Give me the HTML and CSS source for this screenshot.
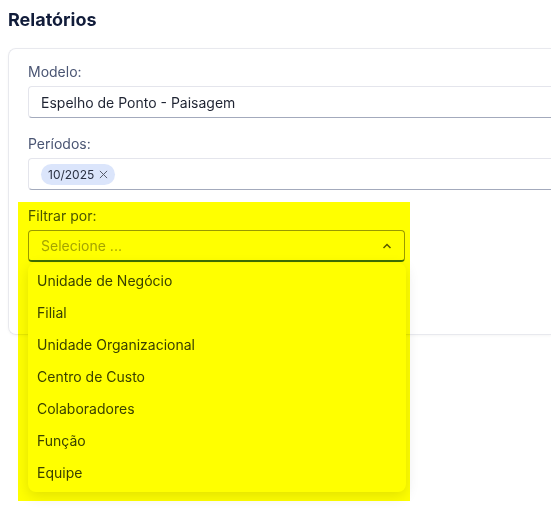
FILE: index.html
```html
<!DOCTYPE html>
<html lang="pt-BR">
<head>
	<meta charset="utf-8">
	<title>Relatórios</title>
	<link rel="stylesheet" href="styles.css">
</head>
<body>
	<div id="page">
		<h1 class="PageTitle">Relatórios</h1>

		<div class="Card">
			<div class="Field">
				<label class="FieldLabel">Modelo:</label>
				<div class="Input">Espelho de Ponto - Paisagem</div>
			</div>

			<div class="Field">
				<label class="FieldLabel">Períodos:</label>
				<div class="Input">
					<span class="Chip">10/2025
						<svg class="ChipClose" width="9" height="9" viewBox="0 0 10 10"><path d="M1 1L9 9M9 1L1 9" stroke="currentColor" stroke-width="1.1" fill="none"/></svg>
					</span>
				</div>
			</div>

			<div class="Field FieldNarrow">
				<label class="FieldLabel">Filtrar por:</label>
				<div class="Select Open">
					<span class="Placeholder">Selecione ...</span>
					<svg class="Chevron" width="10" height="6" viewBox="0 0 10 6"><path d="M1.5 5L5 1.5L8.5 5" stroke="currentColor" stroke-width="1.5" fill="none"/></svg>
					<ul class="Menu">
						<li>Unidade de Negócio</li>
						<li>Filial</li>
						<li>Unidade Organizacional</li>
						<li>Centro de Custo</li>
						<li>Colaboradores</li>
						<li>Função</li>
						<li>Equipe</li>
					</ul>
				</div>
			</div>
		</div>

		<div class="Highlight"></div>
	</div>
</body>
</html>
```

FILE: styles.css
```css
*
{
	padding: 0px;
	margin: 0px;
	box-sizing: border-box;
}
html
{
	overflow: hidden;
}
body
{
	background-color: white;
	font-family: Inter, "Noto Sans", sans-serif;
	color: #1f2937;
}
#page
{
	position: relative;
	padding: 8px 0 8px 8px;
	min-height: 515px;
}
.PageTitle
{
	font-size: 18px;
	line-height: 24px;
	font-weight: 700;
	color: #111c3a;
	margin-bottom: 16px;
}
/* card runs on past the right edge, so no right border */
.Card
{
	border: 1px solid #e8e9ee;
	border-right: none;
	border-radius: 8px 0 0 8px;
	box-shadow: 0 1px 3px rgba(0, 0, 0, 0.04);
	padding: 13px 0 72px 19px;
	display: flex;
	flex-direction: column;
	gap: 16px;
}
.Field
{
	display: flex;
	flex-direction: column;
	gap: 4px;
}
.FieldNarrow
{
	width: 377px;
}
.FieldLabel
{
	font-size: 14px;
	line-height: 20px;
	color: #4a5573;
}
.Input
{
	height: 32px;
	border: 1px solid #e4e5ec;
	border-bottom-color: #a3aabc;
	border-right: none;
	border-radius: 4px 0 0 4px;
	padding: 0 12px;
	display: flex;
	align-items: center;
	font-size: 14px;
	color: #1f2433;
}
.Chip
{
	display: inline-flex;
	align-items: center;
	gap: 5px;
	height: 21px;
	padding: 0 7px 0 7px;
	border-radius: 11px;
	background-color: #dbe5fb;
	font-size: 12px;
	color: #2b3142;
}
.ChipClose
{
	color: #565c6c;
}
.Select
{
	position: relative;
	height: 32px;
	border: 1px solid #9a9aa0;
	border-bottom: 2px solid #3f6f3a;
	border-radius: 4px;
	padding: 0 12px;
	display: flex;
	align-items: center;
	justify-content: space-between;
	font-size: 14px;
}
.Placeholder
{
	color: #a4a4b0;
}
.Chevron
{
	color: #5a5a60;
	margin-right: 0px;
}
.Menu
{
	position: absolute;
	left: -1px;
	right: -2px;
	top: 32px;
	list-style: none;
	background-color: white;
	border-radius: 8px;
	box-shadow: 0 4px 14px rgba(0, 0, 0, 0.12);
	padding: 2px 0 3px 0;
}
.Menu li
{
	height: 32px;
	line-height: 32px;
	padding-left: 9px;
	font-size: 14px;
	color: #3a4150;
}
/* marker laid over the filter block */
.Highlight
{
	position: absolute;
	left: 18px;
	top: 202px;
	width: 392px;
	height: 299px;
	background-color: #ffff00;
	mix-blend-mode: multiply;
	pointer-events: none;
}
```
